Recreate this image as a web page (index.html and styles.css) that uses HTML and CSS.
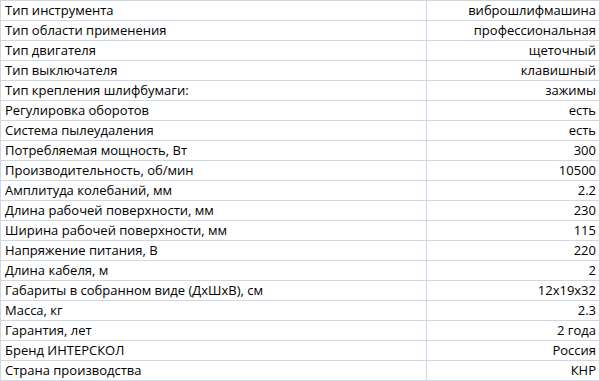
FILE: index.html
```html
<!DOCTYPE html>
<html lang="ru">
<head>
<meta charset="utf-8">
<link rel="stylesheet" href="styles.css">
</head>
<body>
<table class="specs">
<tbody>
<tr><td class="name">Тип инструмента</td><td class="val">виброшлифмашина</td></tr>
<tr><td class="name">Тип области применения</td><td class="val">профессиональная</td></tr>
<tr><td class="name">Тип двигателя</td><td class="val">щеточный</td></tr>
<tr><td class="name">Тип выключателя</td><td class="val">клавишный</td></tr>
<tr><td class="name">Тип крепления шлифбумаги:</td><td class="val">зажимы</td></tr>
<tr><td class="name">Регулировка оборотов</td><td class="val">есть</td></tr>
<tr><td class="name">Система пылеудаления</td><td class="val">есть</td></tr>
<tr><td class="name">Потребляемая мощность, Вт</td><td class="val">300</td></tr>
<tr><td class="name">Производительность, об/мин</td><td class="val">10500</td></tr>
<tr><td class="name">Амплитуда колебаний, мм</td><td class="val">2.2</td></tr>
<tr><td class="name">Длина рабочей поверхности, мм</td><td class="val">230</td></tr>
<tr><td class="name">Ширина рабочей поверхности, мм</td><td class="val">115</td></tr>
<tr><td class="name">Напряжение питания, В</td><td class="val">220</td></tr>
<tr><td class="name">Длина кабеля, м</td><td class="val">2</td></tr>
<tr><td class="name">Габариты в собранном виде (ДхШхВ), см</td><td class="val">12х19х32</td></tr>
<tr><td class="name">Масса, кг</td><td class="val">2.3</td></tr>
<tr><td class="name">Гарантия, лет</td><td class="val">2 года</td></tr>
<tr><td class="name">Бренд ИНТЕРСКОЛ</td><td class="val">Россия</td></tr>
<tr><td class="name">Страна производства</td><td class="val">КНР</td></tr>
</tbody>
</table>
</body>
</html>
```
FILE: styles.css
```css
html, body {
  margin: 0;
  padding: 0;
  background: #ffffff;
}
.specs {
  border-collapse: collapse;
  width: 600px;
  table-layout: fixed;
  font-family: "Open Sans", "Liberation Sans", sans-serif;
  font-size: 13px;
  color: #000000;
}
.specs td {
  border: 1px solid #d0d7e5;
  height: 19px;
  padding: 0 3px 0 4px;
  line-height: 19px;
  white-space: nowrap;
  overflow: hidden;
  vertical-align: bottom;
}
.specs .name {
  width: 418px;
  text-align: left;
}
.specs .val {
  text-align: right;
}
```
